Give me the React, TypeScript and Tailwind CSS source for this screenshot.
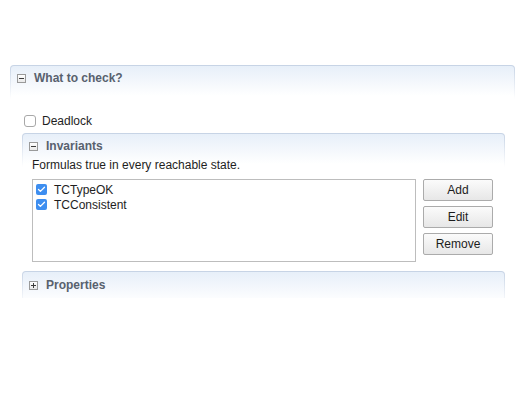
import { Check } from 'lucide-react';

function Toggle({ open }: { open: boolean }) {
  return (
    <span className="relative flex h-[9px] w-[9px] shrink-0 items-center justify-center border border-[#9a9a9a] bg-gradient-to-b from-white to-[#e9e9e9]">
      <span className="absolute h-px w-[5px] bg-[#3c3c3c]" />
      {!open && <span className="absolute h-[5px] w-px bg-[#3c3c3c]" />}
    </span>
  );
}

function SectionFrame({ children }: { children: React.ReactNode }) {
  return (
    <div className="rounded-t-[4px] bg-[linear-gradient(to_bottom,#c6d3e5,#ffffff_34px)] px-px pt-px">
      <div className="rounded-t-[3px] bg-[linear-gradient(to_bottom,#e7eff9,#ffffff_30px)]">
        {children}
      </div>
    </div>
  );
}

function SectionTitle({ open, title, height }: { open: boolean; title: string; height: string }) {
  return (
    <div className={`flex items-center gap-[8px] pl-[6px] ${height}`}>
      <Toggle open={open} />
      <span className="font-bold text-[12px] text-[#58616e]">{title}</span>
    </div>
  );
}

function ItemCheck() {
  return (
    <span className="flex h-[11px] w-[11px] shrink-0 items-center justify-center rounded-[2px] bg-[#3d8ef0]">
      <Check className="h-[9px] w-[9px] text-white" strokeWidth={3.5} />
    </span>
  );
}

function Button({ label }: { label: string }) {
  return (
    <button className="h-[22px] w-[70px] rounded-[2px] border border-[#ababab] bg-gradient-to-b from-[#fbfbfb] to-[#e7e7e7] text-[12px] text-[#1c1c1c]">
      {label}
    </button>
  );
}

export default function App() {
  const invariants = ['TCTypeOK', 'TCConsistent'];

  return (
    <div className="h-[400px] w-[532px] bg-white pt-[65px] pl-[10px] font-['Liberation_Sans',Arial,sans-serif] text-[12px] text-[#1e1e1e]">
      <div className="w-[505px]">
        <SectionFrame>
          <SectionTitle open title="What to check?" height="h-[24px]" />

          <div className="pt-[22px] pb-[20px]">
            <label className="flex items-center gap-[6px] pl-[13px]">
              <span className="h-[12px] w-[12px] rounded-[3px] border border-[#a8a8a8] bg-white" />
              <span>Deadlock</span>
            </label>

            <div className="mt-[3px] ml-[11px] mr-[9px]">
              <SectionFrame>
                <SectionTitle open title="Invariants" height="h-[24px]" />
                <p className="pl-[9px] leading-[15px]">Formulas true in every reachable state.</p>
                <div className="mt-[6px] flex gap-[7px] pl-[9px] pr-[11px]">
                  <div className="h-[83px] w-[384px] border border-[#bdbdbd] bg-white px-[3px] pt-[2px]">
                    {invariants.map((name) => (
                      <div key={name} className="flex h-[15px] items-center gap-[7px]">
                        <ItemCheck />
                        <span>{name}</span>
                      </div>
                    ))}
                  </div>
                  <div className="flex flex-col gap-[5px]">
                    <Button label="Add" />
                    <Button label="Edit" />
                    <Button label="Remove" />
                  </div>
                </div>
              </SectionFrame>
            </div>

            <div className="mt-[9px] ml-[11px] mr-[9px]">
              <SectionFrame>
                <SectionTitle open={false} title="Properties" height="h-[26px]" />
              </SectionFrame>
            </div>
          </div>
        </SectionFrame>
      </div>
    </div>
  );
}
